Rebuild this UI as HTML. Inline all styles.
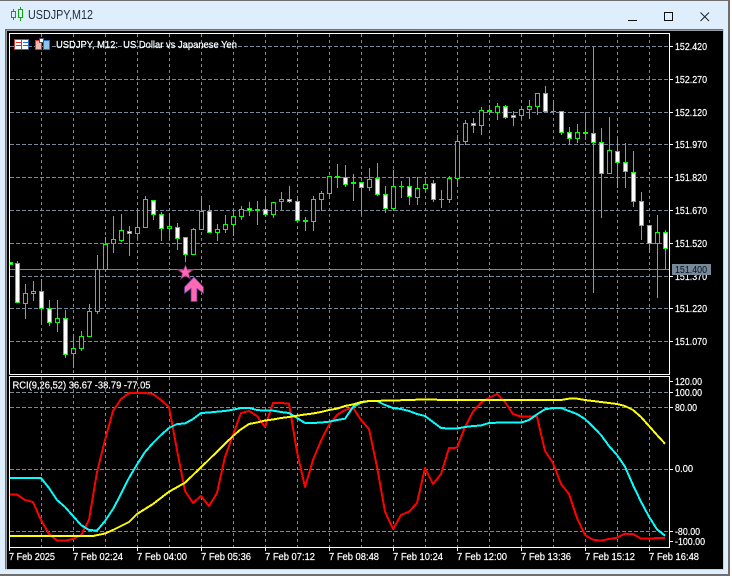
<!DOCTYPE html>
<html><head><meta charset="utf-8"><title>USDJPY,M12</title>
<style>
html,body{margin:0;padding:0;background:#fff;width:732px;height:576px;overflow:hidden}
svg{display:block;position:absolute;left:0;top:0}
text{font-family:"Liberation Sans",sans-serif;font-size:10px;fill:#fff;stroke:#fff;stroke-width:.2}
</style></head>
<body>
<svg width="732" height="576" viewBox="0 0 732 576" xmlns="http://www.w3.org/2000/svg">
<!-- window -->
<rect x="0" y="0" width="730" height="576" fill="#dfeefc"/>
<rect x="0" y="0" width="730" height="1" fill="#6e6e6e"/>
<rect x="728" y="0" width="2" height="576" fill="#6e6e6e"/>
<rect x="0" y="574" width="730" height="2" fill="#6e6e6e"/>
<rect x="5" y="29" width="719" height="541" fill="#c8d0d8"/>
<rect x="5" y="29" width="718" height="1.5" fill="#6e6e6e"/>
<rect x="5" y="29" width="1.5" height="540" fill="#6e6e6e"/>
<rect x="7" y="31" width="716" height="538" fill="#000"/>
<!-- title -->
<g fill="none" stroke="#0fa50f" shape-rendering="crispEdges">
<path d="M13.500 9V11M13.500 18V20M11.500 11.500h4v6h-4zM20.500 7V9M20.500 18V21M18.500 9.500h4v8h-4z"/>
</g>
<text x="28" y="19" textLength="65" lengthAdjust="spacingAndGlyphs" style="font-size:12.5px;fill:#1f2d3d;stroke:none">USDJPY,M12</text>
<g shape-rendering="crispEdges" fill="none" stroke="#111">
<path d="M628 20.500h9"/>
<rect x="664.500" y="12.500" width="8" height="8"/>
</g>
<path d="M700.500 12.500l8.500 8.500M709 12.500l-8.500 8.500" stroke="#222" fill="none"/>
<!-- main grid -->
<g fill="none" stroke="#778899" stroke-dasharray="4 2" shape-rendering="crispEdges">
<path d="M10 46.500H669M10 79.500H669M10 112.500H669M10 144.500H669M10 177.500H669M10 210.500H669M10 243.500H669M10 276.500H669M10 308.500H669M10 341.500H669"/>
<path stroke-dasharray="3 3" d="M41.500 34V374M73.500 34V374M105.500 34V374M137.500 34V374M169.500 34V374M201.500 34V374M233.500 34V374M265.500 34V374M297.500 34V374M329.500 34V374M361.500 34V374M393.500 34V374M425.500 34V374M457.500 34V374M489.500 34V374M521.500 34V374M553.500 34V374M585.500 34V374M617.500 34V374M649.500 34V374"/>
<!-- RCI grid -->
<path d="M10 392.500H669M10 407.500H669M10 469.500H669M10 531.500H669"/>
<path stroke-dasharray="3 3" d="M41.500 377V547M73.500 377V547M105.500 377V547M137.500 377V547M169.500 377V547M201.500 377V547M233.500 377V547M265.500 377V547M297.500 377V547M329.500 377V547M361.500 377V547M393.500 377V547M425.500 377V547M457.500 377V547M489.500 377V547M521.500 377V547M553.500 377V547M585.500 377V547M617.500 377V547M649.500 377V547"/>
</g>
<!-- price line -->
<path d="M10 269.500H669" stroke="#778899" shape-rendering="crispEdges"/>
<!-- wicks -->
<path shape-rendering="crispEdges" fill="none" stroke="#00ff00" d="M17.500 261V303M25.500 284V319M33.500 281V301M41.500 279V324M49.500 300V326M57.500 300V332M65.500 310V358M73.500 334V368M81.500 331V351M89.500 304V337M97.500 255V314M105.500 237V272M113.500 216V253M121.500 214V242M129.500 226V256M137.500 208V240M145.500 196V228M153.500 200V220M161.500 212V241M169.500 213V240M177.500 223V250M185.500 237V262M193.500 228V255M201.500 196V230M209.500 205V233M217.500 224V241M225.500 215V233M233.500 210V236M241.500 206V220M249.500 202V216M257.500 201V225M265.500 196V217M273.500 202V218M281.500 192V211M289.500 186V203M297.500 196V223M305.500 217V231M313.500 196V231M321.500 191V211M329.500 176V198M337.500 164V188M345.500 165V187M353.500 174V201M361.500 182V215M369.500 168V191M377.500 163V196M385.500 186V213M393.500 170V211M401.500 181V198M409.500 178V205M417.500 177V205M425.500 180V193M433.500 180V202M441.500 190V208M449.500 176V203M457.500 135V186M465.500 120V145M473.500 118V133M481.500 107V135M489.500 105V115M497.500 103V120M505.500 105V119M513.500 111V126M521.500 106V120M529.500 100V119M537.500 93V115M545.500 86V112M553.500 100V114M561.500 111V135M569.500 127V145M577.500 124V143M585.500 112V140M593.500 47V293M601.500 128V218M609.500 117V174M617.500 139V188M625.500 143V188M633.500 151V207M641.500 192V240M649.500 225V253M657.500 215V298M665.500 230V269"/>
<!-- hollow bodies -->
<path shape-rendering="crispEdges" fill="#000" stroke="#00ff00" d="M23.500 293.500h4V303.500h-4zM31.500 291.500h4V293.500h-4zM55.500 318.500h4V322.500h-4zM71.500 348.500h4V353.500h-4zM79.500 336.500h4V348.500h-4zM87.500 311.500h4V336.500h-4zM95.500 269.500h4V311.500h-4zM103.500 244.500h4V269.500h-4zM111.500 239.500h4V243.500h-4zM119.500 230.500h4V240.500h-4zM135.500 227.500h4V233.500h-4zM143.500 199.500h4V227.500h-4zM167.500 226.500h4V228.500h-4zM191.500 229.500h4V254.500h-4zM199.500 211.500h4V229.500h-4zM215.500 229.500h4V232.500h-4zM223.500 224.500h4V229.500h-4zM231.500 216.500h4V224.500h-4zM239.500 209.500h4V216.500h-4zM271.500 202.500h4V214.500h-4zM279.500 199.500h4V201.500h-4zM311.500 199.500h4V221.500h-4zM319.500 193.500h4V199.500h-4zM327.500 176.500h4V193.500h-4zM367.500 179.500h4V187.500h-4zM391.500 186.500h4V208.500h-4zM415.500 188.500h4V197.500h-4zM423.500 184.500h4V188.500h-4zM447.500 178.500h4V199.500h-4zM455.500 141.500h4V178.500h-4zM463.500 123.500h4V141.500h-4zM479.500 110.500h4V125.500h-4zM495.500 106.500h4V112.500h-4zM519.500 109.500h4V115.500h-4zM527.500 106.500h4V109.500h-4zM535.500 93.500h4V106.500h-4zM575.500 132.500h4V138.500h-4zM607.500 150.500h4V173.500h-4zM655.500 232.500h4V243.500h-4z"/>
<!-- filled bodies -->
<path shape-rendering="crispEdges" fill="#fff" stroke="#00ff00" d="M15.500 263.500h4V302.500h-4zM39.500 291.500h4V308.500h-4zM47.500 308.500h4V322.500h-4zM63.500 318.500h4V354.500h-4zM127.500 231.500h4V233.500h-4zM151.500 200.500h4V214.500h-4zM159.500 214.500h4V228.500h-4zM175.500 227.500h4V238.500h-4zM183.500 237.500h4V254.500h-4zM207.500 211.500h4V232.500h-4zM247.500 208.500h4V210.500h-4zM263.500 209.500h4V214.500h-4zM287.500 199.500h4V201.500h-4zM295.500 201.500h4V220.500h-4zM343.500 177.500h4V184.500h-4zM359.500 182.500h4V187.500h-4zM375.500 178.500h4V194.500h-4zM383.500 194.500h4V208.500h-4zM407.500 186.500h4V196.500h-4zM431.500 183.500h4V199.500h-4zM471.500 123.500h4V125.500h-4zM503.500 106.500h4V117.500h-4zM511.500 115.500h4V117.500h-4zM543.500 93.500h4V111.500h-4zM559.500 111.500h4V132.500h-4zM567.500 132.500h4V138.500h-4zM591.500 133.500h4V142.500h-4zM599.500 142.500h4V173.500h-4zM615.500 151.500h4V162.500h-4zM623.500 162.500h4V171.500h-4zM631.500 172.500h4V201.500h-4zM639.500 201.500h4V225.500h-4zM647.500 225.500h4V243.500h-4zM663.500 232.500h4V248.500h-4zM9.500 262.500h3V264.500h-3z"/>
<!-- doji -->
<path shape-rendering="crispEdges" fill="#00ff00" d="M255 209h5v2h-5zM303 220h5v2h-5zM335 176h5v2h-5zM351 182h5v2h-5zM399 186h5v1h-5zM439 199h5v1h-5zM487 110h5v2h-5zM551 111h5v1h-5zM583 132h5v2h-5z"/>
<!-- star + arrow -->
<path d="M185.500 265l2.100 5H193l-4.400 3.300 1.700 5.700-4.800-3.200-4.800 3.200 1.700-5.700L178 270h5.400z" fill="#ff69b4" stroke="#7a2a6a" stroke-width=".8"/>
<path d="M194 277l9.500 10v6.500l-6.500-5V301.500h-6V288.500l-6.500 5V287z" fill="#ff69b4" stroke="#5a3a9a" stroke-width=".8"/>
<!-- RCI lines -->
<g fill="none" stroke-width="2" stroke-linejoin="round" shape-rendering="crispEdges">
<polyline stroke="#f00" points="10,494.500 17,494.500 25,500 33,502 41,520 49,534 57,540.500 65,540.700 73,539 81,535 89,520 97,472 105,440 113,411 121,399 129,393 137,393 145,393 153,394 161,400 169,407 177,450 185,491 193,503 201,496 209,506 217,493 225,457 233,435 241,413 249,411 257,416 265,427 273,403 281,403 289,403.700 297,451.700 305,487 313,460 321,440.700 329,425 337,415 345,410 353,407.700 361,420 369,429 377,466.700 385,511.700 393,529 401,515 409,511.700 417,503 425,468 433,484 441,474 449,448 457,447.700 465,427 473,411.700 481,402.700 489,398 497,394 505,402 513,414 521,416.700 537,416.700 545,451 553,463 561,484 569,494 577,518 585,535 593,539.700 601,540.700 609,539 617,537.700 625,533.700 633,534 641,538.700 649,538.700 657,538 665,538"/>
<polyline stroke="#0ff" points="10,478 41,478 49,488 57,500 65,507 73,516 81,525 89,530 97,530.500 105,521 113,509 121,494 129,478 137,464.500 145,452 153,443 161,435 169,428 177,424 185,423.500 193,419 201,413 209,412.500 217,411.700 225,411 233,409.700 241,408 249,408 257,410 265,410.700 273,410.700 281,412 289,413 297,418 305,423 313,423 321,422.500 329,421.700 337,420 345,418.700 353,407 361,402.700 369,401 377,401 385,405 393,408 401,409 409,411 417,414 425,416 433,422 441,428 449,428.500 457,428.500 465,427 473,426 481,425.500 489,423 497,422.700 521,422.700 529,420 537,414.300 545,409.300 553,408 561,408 569,411 577,414 585,419 593,426.700 601,435 609,446 617,455 625,466.700 633,485 641,501.700 649,516.700 657,529.300 665,535.700"/>
<polyline stroke="#ff0" points="10,536 93,536 105,533.500 113,530 121,526 129,522 137,514 153,504 169,491.700 185,482.700 201,467.300 217,451.700 233,436 240,430 249,424 257,422.500 265,420.500 273,419.500 281,418 289,417 297,415.700 305,414.500 313,413.500 321,412 329,410 337,408.700 345,406 353,404.500 361,402 369,401 393,400.500 417,399.700 433,399.500 441,400 561,400 569,398.700 577,398.700 585,400 593,401 601,402 609,403 617,404 625,406 633,410 641,417 649,426 657,435 665,443.700"/>
</g>
<!-- frames -->
<g fill="none" stroke="#fff" shape-rendering="crispEdges">
<path d="M9.500 374.500V33.500H669.500V374.500H9.500"/>
<path d="M9.500 547.500V376.500H669.500V547.500H9.500"/>
<path d="M669 46.500h4M669 79.500h4M669 112.500h4M669 144.500h4M669 177.500h4M669 210.500h4M669 243.500h4M669 276.500h4M669 308.500h4M669 341.500h4M669 381.500h4M669 392.500h4M669 407.500h4M669 469.500h4M669 531.500h4M669 541.500h4"/>
<path d="M9.500 547v4M73.500 547v4M137.500 547v4M201.500 547v4M265.500 547v4M329.500 547v4M393.500 547v4M457.500 547v4M521.500 547v4M585.500 547v4M649.500 547v4"/>
</g>
<!-- price labels -->
<g>
<text x="675" y="50" textLength="32" lengthAdjust="spacingAndGlyphs">152.420</text>
<text x="675" y="83" textLength="32" lengthAdjust="spacingAndGlyphs">152.270</text>
<text x="675" y="116" textLength="32" lengthAdjust="spacingAndGlyphs">152.120</text>
<text x="675" y="148" textLength="32" lengthAdjust="spacingAndGlyphs">151.970</text>
<text x="675" y="181" textLength="32" lengthAdjust="spacingAndGlyphs">151.820</text>
<text x="675" y="214" textLength="32" lengthAdjust="spacingAndGlyphs">151.670</text>
<text x="675" y="247" textLength="32" lengthAdjust="spacingAndGlyphs">151.520</text>
<text x="675" y="280" textLength="32" lengthAdjust="spacingAndGlyphs">151.370</text>
<text x="675" y="312" textLength="32" lengthAdjust="spacingAndGlyphs">151.220</text>
<text x="675" y="345" textLength="32" lengthAdjust="spacingAndGlyphs">151.070</text>
</g>
<rect x="672" y="264" width="39" height="11" fill="#778899"/>
<text x="675" y="273" textLength="32" lengthAdjust="spacingAndGlyphs" style="fill:#06101c;stroke:none">151.400</text>
<!-- RCI labels -->
<text x="675" y="385" textLength="27" lengthAdjust="spacingAndGlyphs">120.00</text>
<text x="675" y="396" textLength="27" lengthAdjust="spacingAndGlyphs">100.00</text>
<text x="675" y="411" textLength="22" lengthAdjust="spacingAndGlyphs">80.00</text>
<text x="675" y="472" textLength="18" lengthAdjust="spacingAndGlyphs">0.00</text>
<text x="675" y="535" textLength="25" lengthAdjust="spacingAndGlyphs">-80.00</text>
<text x="675" y="545" textLength="30" lengthAdjust="spacingAndGlyphs">-100.00</text>
<!-- time labels -->
<text x="9" y="560" textLength="46" lengthAdjust="spacingAndGlyphs">7 Feb 2025</text>
<text x="73" y="560" textLength="50" lengthAdjust="spacingAndGlyphs">7 Feb 02:24</text>
<text x="137" y="560" textLength="50" lengthAdjust="spacingAndGlyphs">7 Feb 04:00</text>
<text x="201" y="560" textLength="50" lengthAdjust="spacingAndGlyphs">7 Feb 05:36</text>
<text x="265" y="560" textLength="50" lengthAdjust="spacingAndGlyphs">7 Feb 07:12</text>
<text x="329" y="560" textLength="50" lengthAdjust="spacingAndGlyphs">7 Feb 08:48</text>
<text x="393" y="560" textLength="50" lengthAdjust="spacingAndGlyphs">7 Feb 10:24</text>
<text x="457" y="560" textLength="50" lengthAdjust="spacingAndGlyphs">7 Feb 12:00</text>
<text x="521" y="560" textLength="50" lengthAdjust="spacingAndGlyphs">7 Feb 13:36</text>
<text x="585" y="560" textLength="50" lengthAdjust="spacingAndGlyphs">7 Feb 15:12</text>
<text x="649" y="560" textLength="50" lengthAdjust="spacingAndGlyphs">7 Feb 16:48</text>
<!-- header legends -->
<text x="56" y="48" textLength="181" lengthAdjust="spacingAndGlyphs">USDJPY, M12:&#160; US Dollar vs Japanese Yen</text>
<text x="12.500" y="388.500" textLength="138" lengthAdjust="spacingAndGlyphs">RCI(9,26,52) 36.67 -38.79 -77.05</text>
<!-- flag icon -->
<g shape-rendering="crispEdges">
<rect x="14" y="39" width="15" height="11" fill="#fff"/>
<path d="M14.500 39.500h7v10h-7zM16 42.500h5M16 45.500h5" fill="none" stroke="#e03030"/>
<path d="M21.500 39.500h7v10h-7zM23 42.500h5M23 45.500h5" fill="none" stroke="#1f70c8"/>
<!-- second icon -->
<rect x="35.500" y="40.500" width="6" height="9" fill="#f8b8b0" stroke="#e03030"/>
<rect x="36" y="41" width="3" height="2" fill="#f8b8b0"/>
<rect x="43.500" y="40.500" width="6" height="9" fill="#8cc4ec" stroke="#1f70c8"/>
<rect x="39.500" y="38.500" width="4" height="4" fill="#fff" stroke="#555"/>
</g>
</svg>
</body></html>
